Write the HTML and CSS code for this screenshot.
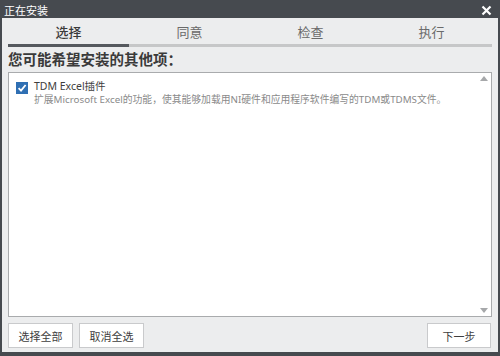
FILE: index.html
```html
<!DOCTYPE html>
<html>
<head>
<meta charset="utf-8">
<link rel="stylesheet" href="styles.css">
</head>
<body>
<div class="window">
  <div class="titlebar">
    <span class="title">正在安装</span>
    <span class="close">
      <svg width="11" height="11" viewBox="0 0 11 11"><path d="M1.5 1.5 L9.5 9.5 M9.5 1.5 L1.5 9.5" stroke="#fff" stroke-width="2.2" fill="none"/></svg>
    </span>
  </div>
  <div class="content">
    <div class="tabs">
      <div class="tab active">选择</div>
      <div class="tab">同意</div>
      <div class="tab">检查</div>
      <div class="tab">执行</div>
    </div>
    <div class="progress"><div class="progress-fill"></div></div>
    <h1 class="heading">您可能希望安装的其他项：</h1>
    <div class="listbox">
      <div class="item">
        <span class="check">
          <svg width="12" height="12" viewBox="0 0 12 12"><rect x="0" y="0" width="12" height="12" fill="#2f6fb3"/><path d="M2.6 6.2 L5 8.6 L9.6 3" stroke="#fff" stroke-width="1.8" fill="none"/></svg>
        </span>
        <div class="item-text">
          <div class="item-title">TDM Excel插件</div>
          <div class="item-desc">扩展Microsoft Excel的功能，使其能够加载用NI硬件和应用程序软件编写的TDM或TDMS文件。</div>
        </div>
      </div>
      <div class="scroll">
        <span class="arrow up"></span>
        <span class="arrow down"></span>
      </div>
    </div>
    <div class="buttons">
      <button class="btn">选择全部</button>
      <button class="btn">取消全选</button>
      <span class="spacer"></span>
      <button class="btn next">下一步</button>
    </div>
  </div>
</div>
</body>
</html>
```
FILE: styles.css
```css
* { box-sizing: border-box; }
html, body { margin: 0; padding: 0; }
body {
  width: 500px;
  height: 356px;
  background: #464a4f;
  font-family: "Noto Sans", "Noto Sans CJK SC", sans-serif;
  overflow: hidden;
}
.window {
  width: 500px;
  height: 356px;
  display: flex;
  flex-direction: column;
  background: #464a4f;
  padding: 0 2px 4px 2px;
}
.titlebar {
  height: 18px;
  display: flex;
  align-items: center;
  justify-content: space-between;
  padding: 0 6px 0 2px;
  flex-shrink: 0;
}
.title {
  color: #fff;
  font-family: "Noto Sans CJK SC", sans-serif;
  font-size: 11px;
  line-height: 18px;
  padding-top: 1px;
}
.close { display: flex; align-items: center; margin-top: 2px; }
.content {
  flex: 1;
  background: #ecedee;
  display: flex;
  flex-direction: column;
  padding: 0 6px 4px 6px;
}
.tabs {
  display: grid;
  grid-template-columns: repeat(4, 1fr);
  height: 26px;
  margin-top: 0;
}
.tab {
  text-align: center;
  font-family: "Noto Sans CJK SC", sans-serif;
  font-size: 13px;
  line-height: 28px;
  color: #6a6a6a;
}
.tab.active { color: #3a3a3a; font-weight: 500; }
.progress {
  height: 3px;
  background: #c6c7c8;
}
.progress-fill {
  width: 121px;
  height: 100%;
  background: #55595e;
}
.heading {
  margin: 2px 0 0 0;
  font-family: "Noto Sans CJK SC", sans-serif;
  font-size: 14.5px;
  font-weight: 700;
  color: #3a3a3a;
  line-height: 20px;
  height: 20px;
}
.listbox {
  margin-top: 3px;
  flex: 1;
  background: #fff;
  border: 1px solid #a9abad;
  position: relative;
  padding: 7px 0 0 7px;
}
.item { display: flex; align-items: flex-start; }
.check { width: 12px; height: 12px; margin-top: 2px; margin-right: 6px; display: flex; }
.item-text { display: flex; flex-direction: column; }
.item-title {
  font-size: 10.5px;
  line-height: 13px;
  color: #3e3e3e;
  font-family: "Noto Sans", "Noto Sans CJK SC", sans-serif;
}
.item-desc {
  font-size: 9.8px;
  line-height: 14px;
  color: #8a8a8a;
  font-family: "Noto Sans", "Noto Sans CJK SC", sans-serif;
}
.scroll {
  position: absolute;
  right: 3px;
  top: 3px;
  bottom: 3px;
  width: 9px;
  display: flex;
  flex-direction: column;
  justify-content: space-between;
  align-items: center;
}
.arrow { width: 0; height: 0; border-left: 4px solid transparent; border-right: 4px solid transparent; }
.arrow.up { border-bottom: 5px solid #a6a8aa; }
.arrow.down { border-top: 5px solid #a6a8aa; }
.buttons {
  display: flex;
  gap: 6px;
  margin-top: 6px;
  height: 25px;
}
.spacer { flex: 1; }
.btn {
  width: 65px;
  height: 25px;
  background: #fff;
  border: 1px solid #c9cacc;
  font-family: "Noto Sans CJK SC", sans-serif;
  font-size: 11px;
  color: #3e3e3e;
  padding: 0;
  margin: 0;
}
.btn.next { width: 64px; margin-right: 1px; }
```
